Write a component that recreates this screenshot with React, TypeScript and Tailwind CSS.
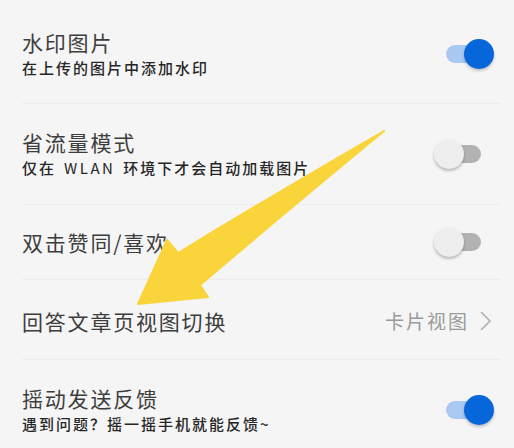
import React from "react";

type Row =
  | { id: string; title: string; desc?: React.ReactNode; kind: "switch"; on: boolean; h: string }
  | { id: string; title: string; desc?: React.ReactNode; kind: "link"; value: string; h: string };

const rows: Row[] = [
  { id: "watermark", title: "水印图片", desc: "在上传的图片中添加水印", kind: "switch", on: true, h: "h-[104px] pt-[4px]" },
  {
    id: "saver",
    title: "省流量模式",
    desc: (
      <>
        仅在<span className="mx-[8px] font-normal tracking-[2.5px]">WLAN</span>环境下才会自动加载图片
      </>
    ),
    kind: "switch",
    on: false,
    h: "h-[101px]",
  },
  { id: "dblclick", title: "双击赞同/喜欢", kind: "switch", on: false, h: "h-[75px]" },
  { id: "view", title: "回答文章页视图切换", kind: "link", value: "卡片视图", h: "h-[80px] pt-[2px]" },
  { id: "shake", title: "摇动发送反馈", desc: "遇到问题？摇一摇手机就能反馈~", kind: "switch", on: true, h: "h-[100px]" },
];

function Toggle({ on }: { on: boolean }) {
  return (
    <div className="relative mr-[6px] h-[30px] w-[60px] shrink-0">
      <div
        className={
          on
            ? "absolute left-[12px] top-[6px] h-[18px] w-[35px] rounded-full bg-[#a9c9f1]"
            : "absolute left-[12px] top-[6px] h-[18px] w-[35px] rounded-full bg-[#b2b2b2]"
        }
      />
      <div
        className={
          on
            ? "absolute left-[30px] top-0 h-[30px] w-[30px] rounded-full bg-[#0866db] shadow-[0_2px_3px_rgba(0,0,0,0.22)]"
            : "absolute left-0 top-0 h-[30px] w-[30px] rounded-full bg-[#eeeeee] shadow-[0_2px_3px_rgba(0,0,0,0.25)]"
        }
      />
    </div>
  );
}

export default function App() {
  return (
    <div
      className="relative h-[448px] w-[514px] overflow-hidden bg-[#f5f5f5]"
      style={{ fontFamily: '"Noto Sans CJK SC", "Noto Sans", sans-serif' }}
    >
      <div className="flex flex-col pl-[22px] pr-[14px]">
        {rows.map((row, i) => (
          <div
            key={row.id}
            className={`flex items-center justify-between ${row.h} ${
              i < rows.length - 1 ? "border-b border-[#ebebeb]" : ""
            }`}
          >
            <div className="flex flex-col">
              <span className="text-[21px] leading-[28px] tracking-[1.8px] text-[#3d3d3d]">{row.title}</span>
              {row.desc && (
                <span className="text-[15px] font-medium leading-[24px] tracking-[2px] text-[#262626]">
                  {row.desc}
                </span>
              )}
            </div>
            {row.kind === "switch" ? (
              <Toggle on={row.on} />
            ) : (
              <div className="mr-[8px] flex items-center gap-[10px]">
                <span className="text-[19px] leading-[28px] tracking-[2px] text-[#9a9a9a]">{row.value}</span>
                <svg width="13" height="22" viewBox="0 0 13 22" fill="none">
                  <path d="M2 2 L11 11 L2 20" stroke="#b0b0b0" strokeWidth="1.6" strokeLinejoin="miter" />
                </svg>
              </div>
            )}
          </div>
        ))}
      </div>

      {/* annotation arrow drawn over the screenshot */}
      <svg
        className="pointer-events-none absolute left-0 top-0"
        width="514"
        height="448"
        viewBox="0 0 514 448"
      >
        <path
          d="M384 131 Q290 185 178 253 L167 240 L138 304 L208 297 L200 285 Q300 200 384 131 Z"
          fill="#f9d43b"
          stroke="#f9d43b"
          strokeWidth="2"
          strokeLinejoin="round"
        />
      </svg>
    </div>
  );
}
